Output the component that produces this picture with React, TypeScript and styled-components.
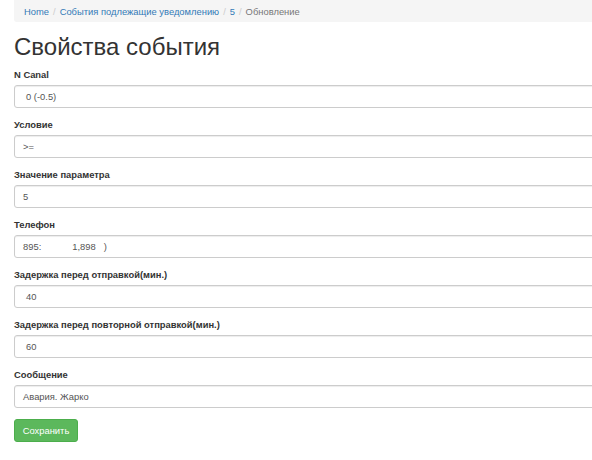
import styled, { createGlobalStyle } from 'styled-components';

const GlobalStyle = createGlobalStyle`
    html, body {
        margin: 0;
        padding: 0;
        background: #fff;
    }
    body {
        font-family: "Liberation Sans", Arial, sans-serif;
        font-size: 9.4px;
        color: #333;
    }
`;

const fields = [
    { label: 'N Canal', value: '0 (-0.5)', select: true },
    { label: 'Условие', value: '>=', select: false },
    { label: 'Значение параметра', value: '5', select: false },
    { label: 'Телефон', value: 'phone', select: false },
    { label: 'Задержка перед отправкой(мин.)', value: '40', select: true },
    { label: 'Задержка перед повторной отправкой(мин.)', value: '60', select: true },
    { label: 'Сообщение', value: 'Авария. Жарко', select: false },
];

export default function App() {
    return (
        <>
            <GlobalStyle />
            <Viewport>
                <Page>
                    <Breadcrumb>
                        <Crumb href="#">Home</Crumb>
                        <Sep>/</Sep>
                        <Crumb href="#">События подлежащие уведомлению</Crumb>
                        <Sep>/</Sep>
                        <Crumb href="#">5</Crumb>
                        <Sep>/</Sep>
                        <Active>Обновление</Active>
                    </Breadcrumb>
                    <Title>Свойства события</Title>
                    <form>
                        {fields.map((f) => (
                            <FormGroup key={f.label}>
                                <Label>{f.label}</Label>
                                <Control $select={f.select}>
                                    {f.value === 'phone' ? (
                                        <>
                                            895:
                                            <Gap $w={31} />
                                            1,898
                                            <Gap $w={8} />
                                            )
                                        </>
                                    ) : (
                                        f.value
                                    )}
                                </Control>
                            </FormGroup>
                        ))}
                        <SaveButton type="button">Сохранить</SaveButton>
                    </form>
                </Page>
            </Viewport>
        </>
    );
}

const Viewport = styled.div`
    width: 592px;
    height: 460px;
    overflow: hidden;
`;

const Page = styled.div`
    width: 720px;
    padding-left: 14px;
`;

const Breadcrumb = styled.div`
    display: flex;
    align-items: center;
    height: 22px;
    padding: 0 10px;
    margin-bottom: 13px;
    background: #f5f5f5;
    border-radius: 0 0 3px 3px;
`;

const Crumb = styled.a`
    color: #337ab7;
    text-decoration: none;
`;

const Sep = styled.span`
    color: #ccc;
    padding: 0 4px;
`;

const Active = styled.span`
    color: #777;
`;

const Title = styled.h1`
    margin: 0 0 7px;
    font-size: 24px;
    font-weight: normal;
    line-height: 26.4px;
    color: #333;
    position: relative;
    top: -1px;
`;

const FormGroup = styled.div`
    margin-bottom: 10px;
`;

const Label = styled.label`
    display: block;
    font-weight: bold;
    line-height: 13.6px;
    margin-bottom: 3.4px;
`;

const Control = styled.div<{ $select: boolean }>`
    display: flex;
    align-items: center;
    box-sizing: border-box;
    height: 23px;
    padding: 0 8px 0 ${(p) => (p.$select ? 11 : 8)}px;
    border: 1px solid #ccc;
    border-radius: 3px;
    box-shadow: inset 0 1px 1px rgba(0, 0, 0, 0.075);
    color: #555;
    white-space: pre;
`;

const Gap = styled.span<{ $w: number }>`
    display: inline-block;
    width: ${(p) => p.$w}px;
`;

const SaveButton = styled.button`
    margin-top: 1px;
    width: 64px;
    height: 23px;
    padding: 0;
    background: #5cb85c;
    border: 1px solid #4cae4c;
    border-radius: 3px;
    color: #fff;
    font-family: "Liberation Sans", Arial, sans-serif;
    font-size: 9.4px;
`;
